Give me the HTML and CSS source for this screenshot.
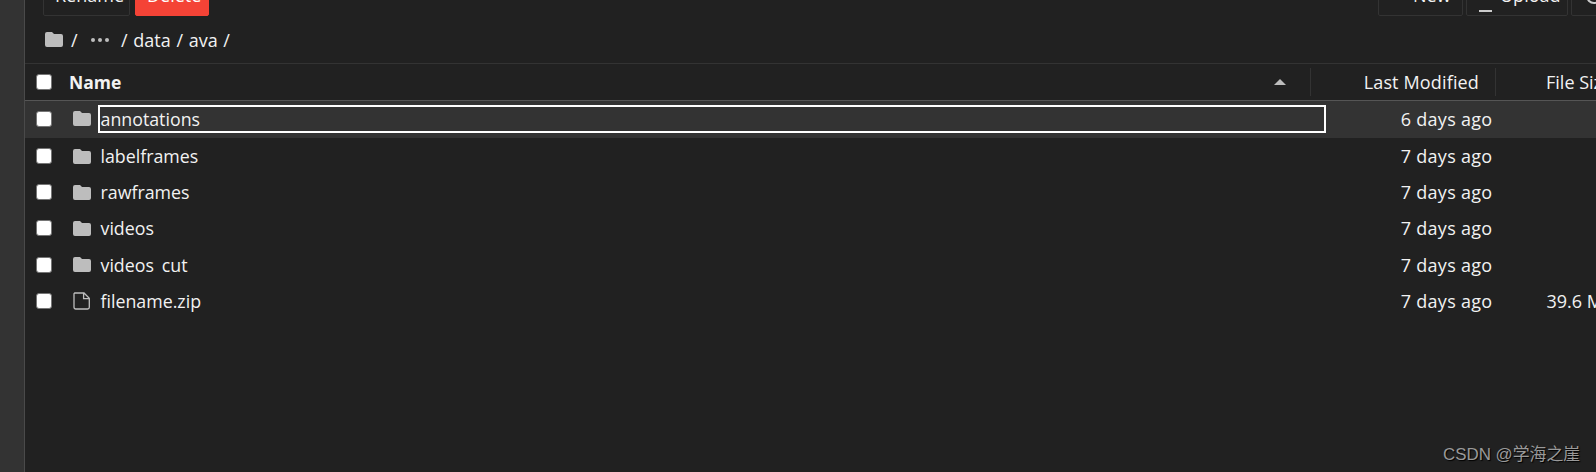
FILE: index.html
```html
<!DOCTYPE html>
<html>
<head>
  <title>File Browser</title>
  <link rel="stylesheet" href="styles.css">
</head>
<body>
  <div class="app">
    <div class="sidebar"></div>
    <div class="main">
      <!-- Toolbar, cut off by the top of the window -->
      <div class="toolbar">
        <div class="button-group">
          <button class="button">Rename</button>
          <button class="button delete-button">Delete</button>
        </div>
        <div class="button-group">
          <button class="button new-button">New</button>
          <button class="button upload-button"><span class="upload-bar"></span>Upload</button>
          <button class="button more-button"><span class="more-ring"></span></button>
        </div>
      </div>

      <!-- Breadcrumbs -->
      <div class="breadcrumbs">
        <svg class="crumb-folder" viewBox="0 0 18 15"><path d="M2 0h5l2 2h7a2 2 0 0 1 2 2v9a2 2 0 0 1-2 2H2a2 2 0 0 1-2-2V2a2 2 0 0 1 2-2z"/></svg>
        <span class="crumb-slash">/</span>
        <span class="crumb-dots"><i></i><i></i><i></i></span>
        <span class="crumb-path">/ data / ava /</span>
      </div>

      <!-- File listing -->
      <div class="list-header">
        <div class="col-check"><span class="checkbox"></span></div>
        <div class="col-name header-name">Name<span class="sort-arrow"></span></div>
        <div class="col-modified header-modified">Last Modified</div>
        <div class="col-size header-size">File Size</div>
      </div>

      <div class="row row-selected">
        <div class="col-check"><span class="checkbox"></span></div>
        <svg class="row-icon" viewBox="0 0 18 15"><path d="M2 0h5l2 2h7a2 2 0 0 1 2 2v9a2 2 0 0 1-2 2H2a2 2 0 0 1-2-2V2a2 2 0 0 1 2-2z"/></svg>
        <div class="row-name"><span class="name-text name-focused">annotations</span></div>
        <div class="col-modified">6 days ago</div>
        <div class="col-size"></div>
      </div>
      <div class="row">
        <div class="col-check"><span class="checkbox"></span></div>
        <svg class="row-icon" viewBox="0 0 18 15"><path d="M2 0h5l2 2h7a2 2 0 0 1 2 2v9a2 2 0 0 1-2 2H2a2 2 0 0 1-2-2V2a2 2 0 0 1 2-2z"/></svg>
        <div class="row-name"><span class="name-text">labelframes</span></div>
        <div class="col-modified">7 days ago</div>
        <div class="col-size"></div>
      </div>
      <div class="row">
        <div class="col-check"><span class="checkbox"></span></div>
        <svg class="row-icon" viewBox="0 0 18 15"><path d="M2 0h5l2 2h7a2 2 0 0 1 2 2v9a2 2 0 0 1-2 2H2a2 2 0 0 1-2-2V2a2 2 0 0 1 2-2z"/></svg>
        <div class="row-name"><span class="name-text">rawframes</span></div>
        <div class="col-modified">7 days ago</div>
        <div class="col-size"></div>
      </div>
      <div class="row">
        <div class="col-check"><span class="checkbox"></span></div>
        <svg class="row-icon" viewBox="0 0 18 15"><path d="M2 0h5l2 2h7a2 2 0 0 1 2 2v9a2 2 0 0 1-2 2H2a2 2 0 0 1-2-2V2a2 2 0 0 1 2-2z"/></svg>
        <div class="row-name"><span class="name-text">videos</span></div>
        <div class="col-modified">7 days ago</div>
        <div class="col-size"></div>
      </div>
      <div class="row row-tall">
        <div class="col-check"><span class="checkbox"></span></div>
        <svg class="row-icon" viewBox="0 0 18 15"><path d="M2 0h5l2 2h7a2 2 0 0 1 2 2v9a2 2 0 0 1-2 2H2a2 2 0 0 1-2-2V2a2 2 0 0 1 2-2z"/></svg>
        <div class="row-name"><span class="name-text">videos<span class="faint-underscore">_</span>cut</span></div>
        <div class="col-modified">7 days ago</div>
        <div class="col-size"></div>
      </div>
      <div class="row">
        <div class="col-check"><span class="checkbox"></span></div>
        <svg class="row-icon file-icon" viewBox="0 0 18 18"><path d="M1.7 1h9.3l5.3 5.3v9a1.7 1.7 0 0 1-1.7 1.7H2.7a1.7 1.7 0 0 1-1.7-1.7V1.7z M10.6 1v5.6h5.7"/></svg>
        <div class="row-name"><span class="name-text">filename.zip</span></div>
        <div class="col-modified">7 days ago</div>
        <div class="col-size">39.6 MB</div>
      </div>
    </div>
  </div>
  <div class="watermark">CSDN @学海之崖</div>
</body>
</html>
```

FILE: styles.css
```css
html, body {
  margin: 0;
  padding: 0;
  height: 100%;
  overflow: hidden;
}

body {
  font-family: 'Open Sans', 'Noto Sans', sans-serif;
  font-size: 18px;
  color: #f2f2f2;
  background: #212121;
}

.app {
  display: flex;
  height: 472px;
  width: 1700px;
}

.sidebar {
  width: 24px;
  background: #333;
  border-right: 1px solid #4a4a4a;
}

.main {
  flex: 1;
  background: #212121;
}

.toolbar {
  display: flex;
  justify-content: space-between;
  align-items: flex-end;
  height: 16px;
  padding: 0 0 0 18px;
  overflow: hidden;
}

.button-group {
  display: flex;
  gap: 3px;
}

.button {
  height: 34px;
  padding: 0 11px;
  background: transparent;
  color: #f2f2f2;
  border: 1px solid #333;
  border-radius: 2px;
  font-family: inherit;
  font-size: 18px;
  display: flex;
  align-items: flex-start;
  width: 87px;
}

.delete-button {
  width: 74px;
  background: #f44336;
  border-color: #f44336;
  color: #fff;
  margin-left: 2px;
}

.new-button {
  width: 85px;
  padding-left: 34px;
}

.upload-button {
  width: 102px;
  padding-left: 12px;
  gap: 8px;
}

.upload-bar {
  display: block;
  width: 13px;
  height: 2px;
  background: #ccc;
  margin-top: 27px;
  flex: none;
}

.more-button {
  width: 129px;
  padding-left: 14px;
}

.more-ring {
  display: block;
  width: 12px;
  height: 12px;
  margin-top: 5px;
  border: 2px solid #ccc;
  border-radius: 50%;
  flex: none;
}

.breadcrumbs {
  display: flex;
  align-items: center;
  height: 47px;
  padding-left: 20px;
}

.crumb-folder {
  width: 18px;
  height: 15px;
  fill: #bdbdbd;
  margin-right: 8px;
}

.crumb-slash {
  width: 19px;
}

.crumb-dots {
  display: flex;
  gap: 3px;
  width: 30px;
  padding-left: 1px;
}

.crumb-dots i {
  width: 4px;
  height: 4px;
  border-radius: 50%;
  background: #bdbdbd;
}

.crumb-path {
  word-spacing: 1px;
}

.list-header {
  display: flex;
  align-items: center;
  height: 36px;
  border-top: 1px solid #333;
  border-bottom: 1px solid #555;
}

.col-check {
  width: 37px;
  padding-left: 11px;
  box-sizing: border-box;
  display: flex;
  flex: none;
}

.checkbox {
  display: block;
  width: 14px;
  height: 14px;
  background: #fff;
  border: 1px solid #767676;
  border-radius: 3px;
}

.header-name {
  width: 1249px;
  height: 28px;
  box-sizing: border-box;
  padding: 0 24px 0 7px;
  font-size: 17.5px;
  font-weight: 700;
  display: flex;
  align-items: center;
  justify-content: space-between;
  border-right: 1px solid #333;
  flex: none;
}

.sort-arrow {
  width: 0;
  height: 0;
  border-left: 6px solid transparent;
  border-right: 6px solid transparent;
  border-bottom: 6px solid #bdbdbd;
}

.header-modified {
  height: 28px;
  display: flex;
  align-items: center;
  justify-content: flex-end;
  width: 185px;
  box-sizing: border-box;
  padding-right: 16px;
  letter-spacing: 0.15px;
  border-right: 1px solid #333;
  flex: none;
}

.header-size {
  padding-left: 50px;
  flex: none;
}

.row {
  display: flex;
  align-items: center;
  height: 36px;
}

.row-selected {
  background: #333;
  height: 37px;
  padding-bottom: 2px;
  box-sizing: border-box;
}

.row-tall {
  height: 37px;
}

.row-icon {
  width: 18px;
  height: 15px;
  fill: #bdbdbd;
  margin-left: 11px;
  flex: none;
}

.file-icon {
  height: 18px;
  fill: none;
  stroke: #bdbdbd;
  stroke-width: 1.3;
}

.row-name {
  width: 1235px;
  padding-left: 7px;
  box-sizing: border-box;
  flex: none;
}

.name-text {
  display: block;
  padding: 0 0.5px;
  font-size: 17.8px;
  line-height: 24px;
  border: 2px solid transparent;
}

.name-focused {
  border-color: #fff;
}

.faint-underscore {
  color: transparent;
}

.row .col-modified {
  width: 166.5px;
  text-align: right;
  letter-spacing: 0.3px;
  flex: none;
}

.row .col-size {
  padding-left: 54px;
  flex: none;
}

.watermark {
  position: absolute;
  left: 1443px;
  top: 440px;
  font-family: 'Liberation Sans', 'Noto Sans CJK SC', sans-serif;
  font-size: 16.9px;
  color: #9a9a9a;
  text-shadow: 1px 1px 1px #000;
}
```
